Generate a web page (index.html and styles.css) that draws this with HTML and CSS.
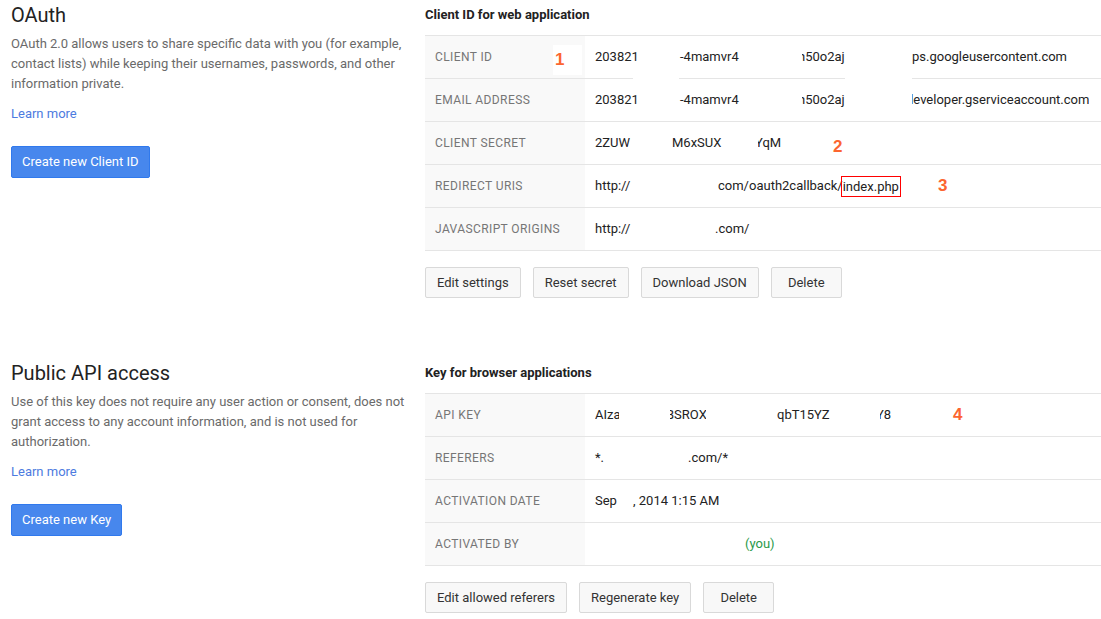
FILE: index.html
```html
<!DOCTYPE html>
<html>
<head>
<meta charset="utf-8">
<title>Credentials</title>
<link rel="stylesheet" href="styles.css">
</head>
<body>
<section class="sec">
  <div class="intro">
    <h2 class="heading">OAuth</h2>
    <p class="desc">OAuth 2.0 allows users to share specific data with you (for example, contact lists) while keeping their usernames, passwords, and other information private.</p>
    <a class="learn" href="#">Learn more</a>
    <button class="btn-primary">Create new Client ID</button>
  </div>
  <div class="detail">
    <h3 class="title">Client ID for web application</h3>
    <div class="table">
      <div class="row">
        <div class="label">CLIENT ID<span class="badge">1</span></div>
        <div class="value">
          <span class="seg w85">203821</span><span class="seg w122">-4mamvr4</span><span class="seg clip w110"><span class="shift4">h50o2aj</span></span><span class="seg">ps.googleusercontent.com</span>
        </div>
        <span class="redact r1"></span><span class="redact r2"></span>
      </div>
      <div class="row">
        <div class="label">EMAIL ADDRESS</div>
        <div class="value">
          <span class="seg w85">203821</span><span class="seg w122">-4mamvr4</span><span class="seg clip w110"><span class="shift4">h50o2aj</span></span><span class="seg clip"><span class="shift6">developer.gserviceaccount.com</span></span>
        </div>
      </div>
      <div class="row">
        <div class="label">CLIENT SECRET</div>
        <div class="value">
          <span class="seg w77">2ZUW</span><span class="seg w86">M6xSUX</span><span class="seg clip w75"><span class="shift3">YqM</span></span><span class="note low">2</span>
        </div>
      </div>
      <div class="row">
        <div class="label">REDIRECT URIS</div>
        <div class="value">
          <span class="seg w123">http://</span><span class="seg">com/oauth2callback/</span><span class="boxed">index.php</span><span class="note gap37">3</span>
        </div>
      </div>
      <div class="row">
        <div class="label">JAVASCRIPT ORIGINS</div>
        <div class="value">
          <span class="seg w120">http://</span><span class="seg">.com/</span>
        </div>
      </div>
    </div>
    <div class="actions">
      <button class="btn">Edit settings</button>
      <button class="btn">Reset secret</button>
      <button class="btn">Download JSON</button>
      <button class="btn">Delete</button>
    </div>
  </div>
</section>

<section class="sec">
  <div class="intro">
    <h2 class="heading">Public API access</h2>
    <p class="desc">Use of this key does not require any user action or consent, does not grant access to any account information, and is not used for authorization.</p>
    <a class="learn" href="#">Learn more</a>
    <button class="btn-primary">Create new Key</button>
  </div>
  <div class="detail">
    <h3 class="title">Key for browser applications</h3>
    <div class="table">
      <div class="row">
        <div class="label">API KEY</div>
        <div class="value">
          <span class="seg clip w24 mr51">AIza</span><span class="seg clip w36 mr71"><span class="shift4">BSROX</span></span><span class="seg w103">qbT15YZ</span><span class="seg clip w73"><span class="shift4">Y8</span></span><span class="note">4</span>
        </div>
      </div>
      <div class="row">
        <div class="label">REFERERS</div>
        <div class="value">
          <span class="seg w93">*.</span><span class="seg">.com/*</span>
        </div>
      </div>
      <div class="row">
        <div class="label">ACTIVATION DATE</div>
        <div class="value">
          <span class="seg w38">Sep</span><span class="seg">, 2014 1:15 AM</span>
        </div>
      </div>
      <div class="row">
        <div class="label">ACTIVATED BY</div>
        <div class="value">
          <span class="seg w150"></span><span class="seg you">(you)</span>
        </div>
      </div>
    </div>
    <div class="actions">
      <button class="btn">Edit allowed referers</button>
      <button class="btn">Regenerate key</button>
      <button class="btn">Delete</button>
    </div>
  </div>
</section>
</body>
</html>
```

FILE: styles.css
```css
html, body {
  margin: 0;
  padding: 0;
}
body {
  width: 1101px;
  height: 619px;
  overflow: hidden;
  background: #fff;
  font-family: Roboto, "Liberation Sans", Arial, sans-serif;
  font-size: 13px;
  color: #222;
}

.sec {
  display: grid;
  grid-template-columns: 400px 720px;
  column-gap: 14px;
  padding: 5px 0 0 11px;
  align-items: start;
}
.sec + .sec {
  margin-top: 60px;
}

/* left column */
.intro {
  display: flex;
  flex-direction: column;
  align-items: flex-start;
}
.heading {
  margin: 0;
  font-size: 20px;
  font-weight: 400;
  line-height: 20px;
  color: #222;
}
.desc {
  margin: 9px 0 0;
  line-height: 20px;
  color: #6a6a6a;
}
.learn {
  margin-top: 10px;
  line-height: 20px;
  color: #4d7be0;
  text-decoration: none;
}
.btn-primary {
  margin-top: 22px;
  height: 32px;
  padding: 0 10px;
  border: 1px solid #3079ed;
  border-radius: 2px;
  background: #4787ed;
  color: #fff;
  font-family: inherit;
  font-size: 13px;
  line-height: 30px;
}

/* right column */
.title {
  margin: 0;
  font-size: 13px;
  font-weight: 700;
  line-height: 20px;
  color: #222;
}
.table {
  margin-top: 10px;
  border-top: 1px solid #e5e5e5;
}
.row {
  position: relative;
  display: flex;
  height: 42px;
  border-bottom: 1px solid #e5e5e5;
}
.label {
  position: relative;
  flex: none;
  width: 150px;
  padding-left: 10px;
  background: #f9f9f9;
  display: flex;
  align-items: center;
  font-size: 12px;
  letter-spacing: 0.4px;
  color: #767676;
}
.value {
  flex: 1;
  padding-left: 10px;
  display: flex;
  align-items: center;
  white-space: nowrap;
  line-height: 20px;
}
.seg {
  flex: none;
  display: block;
}
.clip {
  overflow: hidden;
}
.shift3 { display: block; margin-left: -3px; }
.shift4 { display: block; margin-left: -4px; }
.shift6 { display: block; margin-left: -6px; }

.w24 { width: 24px; }
.w36 { width: 36px; }
.w38 { width: 38px; }
.w73 { width: 73px; }
.w75 { width: 75px; }
.w77 { width: 77px; }
.w85 { width: 85px; }
.w86 { width: 86px; }
.w93 { width: 93px; }
.w103 { width: 103px; }
.w110 { width: 110px; }
.w120 { width: 120px; }
.w122 { width: 122px; }
.w123 { width: 123px; }
.w150 { width: 150px; height: 20px; }
.mr51 { margin-right: 51px; }
.mr71 { margin-right: 71px; }

.you {
  color: #2a9a4a;
}

.boxed {
  flex: none;
  margin-left: -2px;
  padding: 0 1px;
  border: 1px solid #f00;
  line-height: 19px;
}

.note {
  flex: none;
  font-family: "Liberation Sans", Arial, sans-serif;
  font-weight: 700;
  font-size: 17px;
  color: #fc6530;
}
.low {
  margin-top: 7px;
}
.gap37 {
  margin-left: 37px;
}

/* annotation overlays */
.badge {
  position: absolute;
  left: 128px;
  top: 9px;
  width: 27px;
  height: 30px;
  padding-left: 2px;
  background: #fff;
  font-family: "Liberation Sans", Arial, sans-serif;
  font-weight: 700;
  font-size: 17px;
  line-height: 30px;
  letter-spacing: 0;
  color: #fc6530;
}
.redact {
  position: absolute;
  bottom: -1px;
  height: 1px;
  background: #fff;
}
.r1 { left: 208px; width: 46px; }
.r2 { left: 420px; width: 67px; }

/* buttons */
.actions {
  display: flex;
  gap: 12px;
  margin-top: 16px;
}
.btn {
  min-width: 71px;
  height: 31px;
  padding: 0 11px;
  border: 1px solid #d9d9d9;
  border-radius: 2px;
  background: #f8f8f8;
  color: #333;
  font-family: inherit;
  font-size: 13px;
  line-height: 29px;
}
```
